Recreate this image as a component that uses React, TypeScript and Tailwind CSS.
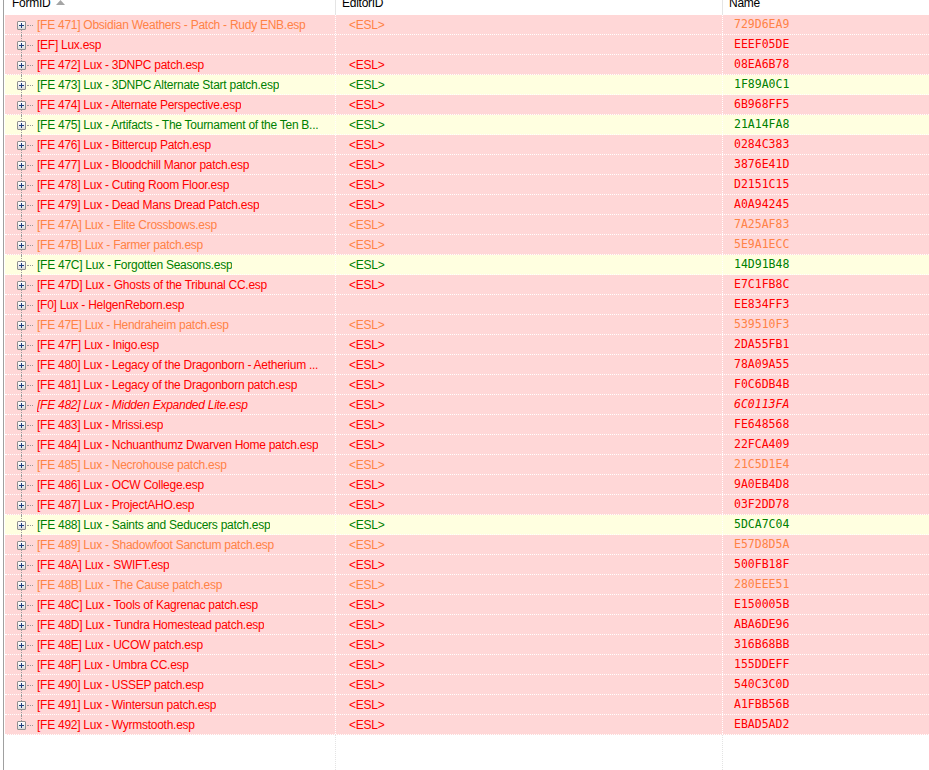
import React from 'react';

type Tone = 'orange' | 'red' | 'green';

const rows: { id: string; esl: boolean; name: string; tone: Tone; italic?: boolean }[] = [
  { id: '[FE 471] Obsidian Weathers - Patch - Rudy ENB.esp', esl: true, name: '729D6EA9', tone: 'orange' },
  { id: '[EF] Lux.esp', esl: false, name: 'EEEF05DE', tone: 'red' },
  { id: '[FE 472] Lux - 3DNPC patch.esp', esl: true, name: '08EA6B78', tone: 'red' },
  { id: '[FE 473] Lux - 3DNPC Alternate Start patch.esp', esl: true, name: '1F89A0C1', tone: 'green' },
  { id: '[FE 474] Lux - Alternate Perspective.esp', esl: true, name: '6B968FF5', tone: 'red' },
  { id: '[FE 475] Lux - Artifacts - The Tournament of the Ten B...', esl: true, name: '21A14FA8', tone: 'green' },
  { id: '[FE 476] Lux - Bittercup Patch.esp', esl: true, name: '0284C383', tone: 'red' },
  { id: '[FE 477] Lux - Bloodchill Manor patch.esp', esl: true, name: '3876E41D', tone: 'red' },
  { id: '[FE 478] Lux - Cuting Room Floor.esp', esl: true, name: 'D2151C15', tone: 'red' },
  { id: '[FE 479] Lux - Dead Mans Dread Patch.esp', esl: true, name: 'A0A94245', tone: 'red' },
  { id: '[FE 47A] Lux - Elite Crossbows.esp', esl: true, name: '7A25AF83', tone: 'orange' },
  { id: '[FE 47B] Lux - Farmer patch.esp', esl: true, name: '5E9A1ECC', tone: 'orange' },
  { id: '[FE 47C] Lux - Forgotten Seasons.esp', esl: true, name: '14D91B48', tone: 'green' },
  { id: '[FE 47D] Lux - Ghosts of the Tribunal CC.esp', esl: true, name: 'E7C1FB8C', tone: 'red' },
  { id: '[F0] Lux - HelgenReborn.esp', esl: false, name: 'EE834FF3', tone: 'red' },
  { id: '[FE 47E] Lux - Hendraheim patch.esp', esl: true, name: '539510F3', tone: 'orange' },
  { id: '[FE 47F] Lux - Inigo.esp', esl: true, name: '2DA55FB1', tone: 'red' },
  { id: '[FE 480] Lux - Legacy of the Dragonborn - Aetherium ...', esl: true, name: '78A09A55', tone: 'red' },
  { id: '[FE 481] Lux - Legacy of the Dragonborn patch.esp', esl: true, name: 'F0C6DB4B', tone: 'red' },
  { id: '[FE 482] Lux - Midden Expanded Lite.esp', esl: true, name: '6C0113FA', tone: 'red', italic: true },
  { id: '[FE 483] Lux - Mrissi.esp', esl: true, name: 'FE648568', tone: 'red' },
  { id: '[FE 484] Lux - Nchuanthumz Dwarven Home patch.esp', esl: true, name: '22FCA409', tone: 'red' },
  { id: '[FE 485] Lux - Necrohouse patch.esp', esl: true, name: '21C5D1E4', tone: 'orange' },
  { id: '[FE 486] Lux - OCW College.esp', esl: true, name: '9A0EB4D8', tone: 'red' },
  { id: '[FE 487] Lux - ProjectAHO.esp', esl: true, name: '03F2DD78', tone: 'red' },
  { id: '[FE 488] Lux - Saints and Seducers patch.esp', esl: true, name: '5DCA7C04', tone: 'green' },
  { id: '[FE 489] Lux - Shadowfoot Sanctum patch.esp', esl: true, name: 'E57D8D5A', tone: 'orange' },
  { id: '[FE 48A] Lux - SWIFT.esp', esl: true, name: '500FB18F', tone: 'red' },
  { id: '[FE 48B] Lux - The Cause patch.esp', esl: true, name: '280EEE51', tone: 'orange' },
  { id: '[FE 48C] Lux - Tools of Kagrenac patch.esp', esl: true, name: 'E150005B', tone: 'red' },
  { id: '[FE 48D] Lux - Tundra Homestead patch.esp', esl: true, name: 'ABA6DE96', tone: 'red' },
  { id: '[FE 48E] Lux - UCOW patch.esp', esl: true, name: '316B68BB', tone: 'red' },
  { id: '[FE 48F] Lux - Umbra CC.esp', esl: true, name: '155DDEFF', tone: 'red' },
  { id: '[FE 490] Lux - USSEP patch.esp', esl: true, name: '540C3C0D', tone: 'red' },
  { id: '[FE 491] Lux - Wintersun patch.esp', esl: true, name: 'A1FBB56B', tone: 'red' },
  { id: '[FE 492] Lux - Wyrmstooth.esp', esl: true, name: 'EBAD5AD2', tone: 'red' },
];

const toneText: Record<Tone, string> = {
  orange: 'text-[#ff8246]',
  red: 'text-[#ff0000]',
  green: 'text-[#008000]',
};

function PlusBox() {
  return (
    <div className="absolute left-[12px] top-[6px] w-[9px] h-[9px] rounded-[1px] border border-[#8f8f8f] bg-gradient-to-b from-white to-[#dcdcdc] flex items-center justify-center">
      <svg width="5" height="5" viewBox="0 0 5 5">
        <path d="M0 2.5H5M2.5 0V5" stroke="#1f3f7f" strokeWidth="1" />
      </svg>
    </div>
  );
}

export default function App() {
  return (
    <div
      className="w-[929px] h-[770px] flex bg-white overflow-hidden text-[12px] tracking-[-0.26px]"
      style={{ fontFamily: '"Liberation Sans", Arial, sans-serif' }}
    >
      <div className="w-[3px] shrink-0" />
      <div className="w-px shrink-0 bg-[#a0a0a0]" />

      <div className="flex-1 flex flex-col pl-px min-w-0">
        {/* Header (scrolled, top cut off) */}
        <div className="h-[15px] shrink-0 flex items-end overflow-hidden text-black leading-none">
          <div className="w-[331px] h-full flex items-end pb-[6px] pl-[7px] gap-[6px] border-r border-[#e5e5e5]">
            <span>FormID</span>
            <svg width="9" height="5" viewBox="0 0 9 5" className="self-start">
              <path d="M0 5 L4.5 0 L9 5 Z" fill="#a5a5a5" />
            </svg>
          </div>
          <div className="w-[387px] h-full flex items-end pb-[6px] pl-[6px] border-r border-[#e5e5e5]">
            <span>EditorID</span>
          </div>
          <div className="flex-1 h-full flex items-end pb-[6px] pl-[6px]">
            <span>Name</span>
          </div>
        </div>

        {/* Rows */}
        {rows.map((row, i) => (
          <div
            key={row.name}
            className={`h-[20px] shrink-0 flex border-b border-dotted border-white ${
              row.tone === 'green' ? 'bg-[#ffffe0]' : 'bg-[#ffd7d7]'
            } ${toneText[row.tone]}`}
          >
            <div className="w-[331px] h-full flex items-center border-r border-dotted border-white">
              <div className="w-[32px] h-full shrink-0 relative">
                <div
                  className={`absolute left-[16px] w-0 border-l border-dotted border-[#9a9a9a] ${
                    i === 0 ? 'top-[10px]' : 'top-0'
                  } ${i === rows.length - 1 ? 'h-[10px]' : 'bottom-[-1px]'}`}
                />
                <div className="absolute left-[22px] top-[10px] w-[6px] border-t border-dotted border-[#9a9a9a]" />
                <PlusBox />
              </div>
              <span className={`whitespace-nowrap overflow-hidden ${row.italic ? 'italic' : ''}`}>{row.id}</span>
            </div>
            <div className="w-[387px] h-full flex items-center pl-[13px] border-r border-dotted border-white">
              {row.esl && <span>&lt;ESL&gt;</span>}
            </div>
            <div
              className="flex-1 h-full flex items-center pl-[11px] text-[11.5px] tracking-normal"
              style={{ fontFamily: '"DejaVu Sans Mono", "Liberation Mono", monospace' }}
            >
              <span className={row.italic ? 'italic' : ''}>{row.name}</span>
            </div>
          </div>
        ))}

        {/* Empty area below the list */}
        <div className="flex-1 flex">
          <div className="w-[331px] border-r border-dotted border-[#e3e3e3]" />
          <div className="w-[387px] border-r border-dotted border-[#e3e3e3]" />
          <div className="flex-1" />
        </div>
      </div>
    </div>
  );
}
